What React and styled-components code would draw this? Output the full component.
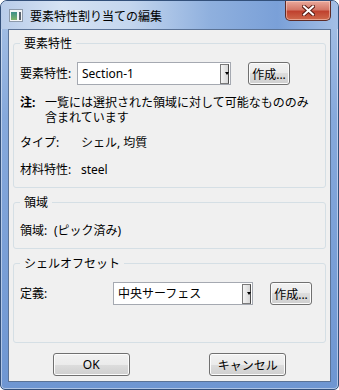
import React from "react";
import styled, { createGlobalStyle } from "styled-components";

const GlobalStyle = createGlobalStyle`
  html, body {
    margin: 0;
    padding: 0;
    background: #ffffff;
  }
  body {
    font-family: "Noto Sans", "Noto Sans CJK JP", sans-serif;
    font-size: 12px;
    color: #000;
  }
  * {
    box-sizing: border-box;
  }
`;

const Window = styled.div`
  width: 339px;
  height: 390px;
  border: 1px solid #33507a;
  border-radius: 7px 7px 5px 5px;
  padding: 0 7px 7px;
  display: flex;
  flex-direction: column;
  background: linear-gradient(180deg, #a8c2e6 0%, #86a9dc 30%, #6e96d2 100%);
  box-shadow: inset 0 0 0 1px rgba(255, 255, 255, 0.45);
`;

const TitleBar = styled.div`
  height: 28px;
  margin: 0 -7px;
  padding: 0 7px 0 8px;
  display: flex;
  align-items: center;
  gap: 7px;
  border-radius: 6px 6px 0 0;
  background: linear-gradient(
    90deg,
    #b8cce9 0%,
    #d6e3f3 18%,
    #c4d6ee 38%,
    #8fb0de 62%,
    #7aa0d8 82%,
    #a4bfe6 100%
  );
`;

const Title = styled.span`
  font-family: "Noto Sans CJK JP", sans-serif;
  font-size: 12px;
  line-height: 16px;
  color: #000;
  margin-top: 1px;
`;

const CloseButton = styled.div`
  margin-left: auto;
  align-self: flex-start;
  width: 46px;
  height: 20px;
  display: flex;
  align-items: center;
  justify-content: center;
  border: 1px solid #5e2b26;
  border-top: none;
  border-radius: 0 0 5px 5px;
  background: linear-gradient(180deg, #e9a99c 0%, #d47868 45%, #c0422f 55%, #cf6a4c 100%);
  box-shadow: inset 0 0 0 1px rgba(255, 220, 210, 0.5);
`;

const Client = styled.div`
  flex: 1;
  border: 1px solid #5b7396;
  background: #f0f0f0;
  padding: 5px 4px 4px;
  display: flex;
  flex-direction: column;
`;

const Group = styled.fieldset`
  margin: ${(p) => p.$mt || 0}px 0 0;
  padding: ${(p) => p.$pt}px 6px ${(p) => p.$pb}px;
  border: 1px solid #d5dfe5;
  border-radius: 3px;
  min-width: 0;
`;

const Legend = styled.legend`
  padding: 0 4px;
  font-family: "Noto Sans CJK JP", sans-serif;
  line-height: 16px;
`;

const Row = styled.div`
  display: flex;
  align-items: center;
  margin-top: ${(p) => p.$mt || 0}px;
  line-height: 16px;
`;

const Label = styled.span`
  width: ${(p) => p.$w}px;
  flex: none;
  white-space: nowrap;
`;

const Bold = styled.span`
  width: ${(p) => p.$w}px;
  flex: none;
  font-weight: bold;
  align-self: flex-start;
`;

const NoteText = styled.span`
  line-height: 15px;
`;

const Combo = styled.div`
  width: ${(p) => p.$w}px;
  height: 23px;
  flex: none;
  display: flex;
  align-items: center;
  padding: 0 1px 0 4px;
  border: 1px solid #a5a9b1;
  background: #fff;
`;

const ComboText = styled.span`
  flex: 1;
  white-space: nowrap;
`;

const ComboArrow = styled.div`
  width: 9px;
  height: 20px;
  display: flex;
  align-items: center;
  justify-content: flex-end;
  border: 1px solid #7a7a7a;
  border-right-color: #4c4c4c;
  background: linear-gradient(90deg, #f4f4f4, #d8d8d8);

  &::after {
    content: "";
    width: 0;
    height: 0;
    margin-right: -1px;
    border-left: 2px solid transparent;
    border-right: 2px solid transparent;
    border-top: 3px solid #000;
  }
`;

const PushButton = styled.button`
  width: ${(p) => p.$w}px;
  height: ${(p) => p.$h || 23}px;
  margin-left: ${(p) => p.$ml || 0}px;
  flex: none;
  padding: 0;
  font-family: "Noto Sans", "Noto Sans CJK JP", sans-serif;
  font-size: 12px;
  color: #000;
  border: 1px solid #707070;
  border-radius: 3px;
  background: linear-gradient(180deg, #f2f2f2 0%, #ebebeb 50%, #dddddd 50%, #cfcfcf 100%);
  box-shadow: inset 0 0 0 1px #fcfcfc;
`;

const ButtonBar = styled.div`
  margin-top: 10px;
  display: grid;
  grid-template-columns: 1fr 1fr;
  justify-items: center;
`;

const AppIcon = () => (
  <svg width="14" height="13" viewBox="0 0 14 13">
    <rect x="0.5" y="0.5" width="13" height="12" fill="#f4f6f8" stroke="#8d9aab" />
    <defs>
      <linearGradient id="pane" x1="0" y1="0" x2="0" y2="1">
        <stop offset="0" stopColor="#3c8f8a" />
        <stop offset="1" stopColor="#7fb46a" />
      </linearGradient>
    </defs>
    <rect x="2" y="3" width="6" height="8" fill="url(#pane)" />
    <rect x="10" y="3" width="2" height="8" fill="#5a6470" />
  </svg>
);

const CloseGlyph = () => (
  <svg width="13" height="11" viewBox="0 0 13 11">
    <path
      d="M2 1.5 L11 9.5 M11 1.5 L2 9.5"
      stroke="#5a1c14"
      strokeWidth="4"
      strokeLinecap="square"
    />
    <path
      d="M2 1.5 L11 9.5 M11 1.5 L2 9.5"
      stroke="#ffffff"
      strokeWidth="2"
      strokeLinecap="square"
    />
  </svg>
);

export default function App() {
  return (
    <>
      <GlobalStyle />
      <Window>
        <TitleBar>
          <AppIcon />
          <Title>要素特性割り当ての編集</Title>
          <CloseButton>
            <CloseGlyph />
          </CloseButton>
        </TitleBar>
        <Client>
          <Group $pt={11} $pb={9}>
            <Legend>要素特性</Legend>
            <Row>
              <Label $w={57}>要素特性:</Label>
              <Combo $w={154}>
                <ComboText>Section-1</ComboText>
                <ComboArrow />
              </Combo>
              <PushButton $w={42} $ml={17}>作成...</PushButton>
            </Row>
            <Row $mt={10}>
              <Bold $w={25}>注:</Bold>
              <NoteText>一覧には選択された領域に対して可能なもののみ含まれています</NoteText>
            </Row>
            <Row $mt={10}>
              <Label $w={61}>タイプ:</Label>
              <span>シェル, 均質</span>
            </Row>
            <Row $mt={11}>
              <Label $w={61}>材料特性:</Label>
              <span>steel</span>
            </Row>
          </Group>
          <Group $mt={6} $pt={13} $pb={9}>
            <Legend>領域</Legend>
            <Row>
              <Label $w={34}>領域:</Label>
              <span>(ピック済み)</span>
            </Row>
          </Group>
          <Group $mt={6} $pt={11} $pb={37}>
            <Legend>シェルオフセット</Legend>
            <Row>
              <Label $w={93}>定義:</Label>
              <Combo $w={140}>
                <ComboText>中央サーフェス</ComboText>
                <ComboArrow />
              </Combo>
              <PushButton $w={42} $ml={17}>作成...</PushButton>
            </Row>
          </Group>
          <ButtonBar>
            <PushButton $w={77}>OK</PushButton>
            <PushButton $w={77}>キャンセル</PushButton>
          </ButtonBar>
        </Client>
      </Window>
    </>
  );
}
